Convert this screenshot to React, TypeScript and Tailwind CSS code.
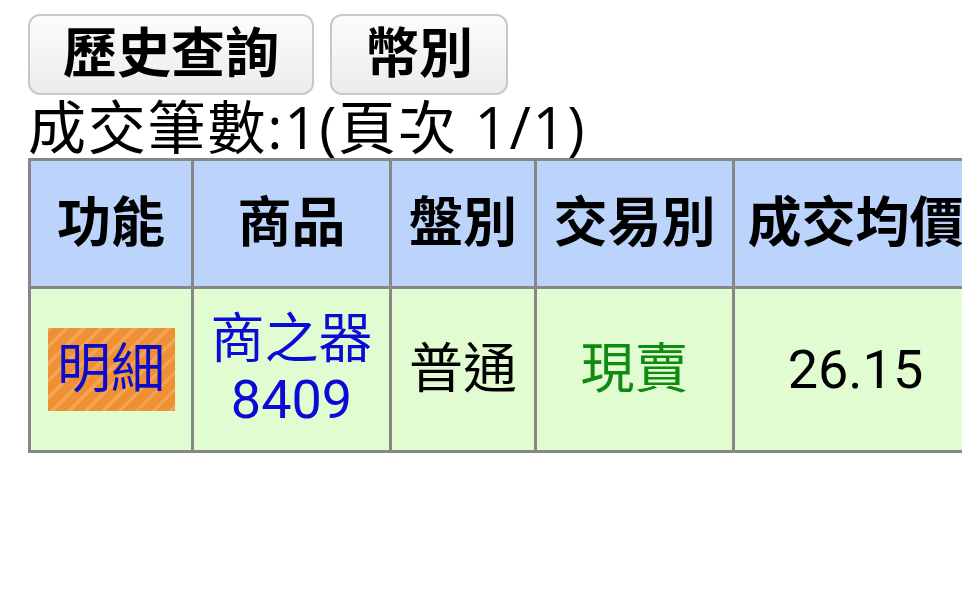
const headers = [
  { label: '功能', w: 'w-[163px]' },
  { label: '商品', w: 'w-[198px]' },
  { label: '盤別', w: 'w-[145px]' },
  { label: '交易別', w: 'w-[198px]' },
  { label: '成交均價', w: 'w-[244px]' },
];

const cell = 'border-[3px] border-[#878787] text-center align-middle p-0';

export default function App() {
  return (
    <div className="w-[962px] h-[595px] overflow-hidden bg-white font-['Roboto','Noto_Sans_CJK_TC',sans-serif] text-black">
      <div className="pl-[28px] pt-[14px]">
        <div className="flex gap-[16px]">
          <button className="w-[286px] h-[81px] rounded-[12px] border-2 border-[#c8c8c8] bg-[linear-gradient(#fcfcfc,#ececec)] text-[54px] font-bold leading-none">
            歷史查詢
          </button>
          <button className="w-[178px] h-[81px] rounded-[12px] border-2 border-[#c8c8c8] bg-[linear-gradient(#fcfcfc,#ececec)] text-[54px] font-bold leading-none">
            幣別
          </button>
        </div>
        <div className="font-['Open_Sans','Noto_Sans_CJK_TC',sans-serif] text-[58px] leading-[63px] tracking-[1.8px] whitespace-nowrap">
          成交筆數:1(頁次 1/1)
        </div>
        <table className="border-collapse table-fixed w-[948px]">
          <thead>
            <tr className="h-[128px] bg-[#bcd3fb]">
              {headers.map((h) => (
                <th key={h.label} className={`${cell} ${h.w} text-[54px] font-bold whitespace-nowrap`}>
                  {h.label}
                </th>
              ))}
            </tr>
          </thead>
          <tbody>
            <tr className="h-[164px] bg-[#e2fcd2] text-[54px] leading-[60px]">
              <td className={cell}>
                <span className="inline-flex items-center justify-center w-[127px] h-[83px] bg-[#ef9032] bg-[repeating-linear-gradient(135deg,rgba(255,255,255,0.18)_0px,rgba(255,255,255,0.18)_3px,transparent_3px,transparent_12px)] text-[#0b0bd0]">
                  明細
                </span>
              </td>
              <td className={`${cell} text-[#0b0bd6]`}>
                商之器
                <br />
                8409
              </td>
              <td className={cell}>普通</td>
              <td className={`${cell} text-[#108a10]`}>現賣</td>
              <td className={cell}>26.15</td>
            </tr>
          </tbody>
        </table>
      </div>
    </div>
  );
}
